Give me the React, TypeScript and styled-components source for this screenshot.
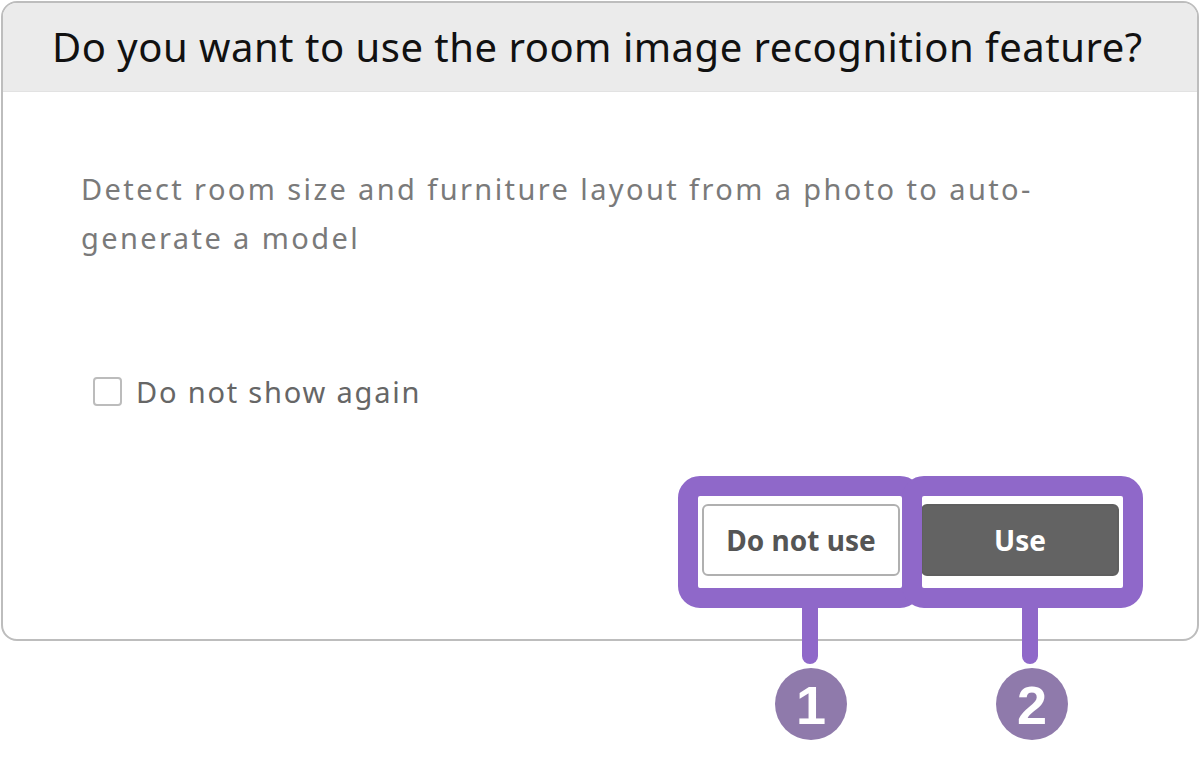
import styled, { createGlobalStyle } from 'styled-components'

const GlobalStyle = createGlobalStyle`
  html, body {
    margin: 0;
    padding: 0;
    background: #ffffff;
  }
  body {
    font-family: "Noto Sans", "Open Sans", sans-serif;
  }
`

const ui = {
  Page: styled.div`
    position: relative;
    width: 1200px;
    height: 758px;
    overflow: hidden;
  `,
  Dialog: styled.section`
    box-sizing: border-box;
    margin: 1px 0 0 1px;
    width: 1198px;
    height: 640px;
    border: 2px solid #bdbdbd;
    border-radius: 16px;
    overflow: hidden;
    display: flex;
    flex-direction: column;
    background: #ffffff;
  `,
  Header: styled.header`
    height: 89px;
    flex-shrink: 0;
    display: flex;
    align-items: center;
    padding: 0 0 2px 49px;
    box-sizing: border-box;
    background: #ebebeb;
    border-bottom: 1px solid #e2e2e2;
  `,
  Title: styled.h2`
    margin: 0;
    font-size: 40px;
    font-weight: 400;
    color: #111111;
    letter-spacing: 0.5px;
    white-space: nowrap;
  `,
  Body: styled.div`
    flex: 1;
    display: flex;
    flex-direction: column;
    padding: 72px 78px 0 78px;
  `,
  Description: styled.p`
    margin: 0;
    width: 1010px;
    font-size: 29px;
    line-height: 49px;
    letter-spacing: 2.4px;
    color: #7a7a7a;
  `,
  CheckRow: styled.label`
    margin: 110px 0 0 12px;
    display: flex;
    align-items: center;
    gap: 14px;
    font-size: 29px;
    letter-spacing: 1.8px;
    color: #666666;
  `,
  Box: styled.span`
    width: 25px;
    height: 25px;
    border: 2px solid #bcbcbc;
    border-radius: 4px;
    background: #ffffff;
  `,
  Footer: styled.div`
    margin-top: 93px;
    display: flex;
    justify-content: flex-end;
    gap: 21px;
  `,
  Button: styled.button<{ $primary?: boolean }>`
    box-sizing: border-box;
    width: 198px;
    height: 72px;
    border-radius: 6px;
    border: 2px solid ${({ $primary }) => ($primary ? '#5f5f5f' : '#b0b0b0')};
    background: ${({ $primary }) => ($primary ? '#636363' : '#ffffff')};
    color: ${({ $primary }) => ($primary ? '#ffffff' : '#555555')};
    font-family: "Noto Sans", "Open Sans", sans-serif;
    font-size: 28px;
    font-weight: 700;
    padding: 0;
  `,
  // callout frames drawn over the dialog buttons
  Frame: styled.div<{ $left: number; $width: number }>`
    position: absolute;
    top: 476px;
    left: ${({ $left }) => $left}px;
    width: ${({ $width }) => $width}px;
    height: 132px;
    box-sizing: border-box;
    border: 20px solid #8f68c9;
    border-radius: 22px;
  `,
  Stem: styled.div<{ $left: number }>`
    position: absolute;
    top: 600px;
    left: ${({ $left }) => $left}px;
    width: 16px;
    height: 64px;
    background: #8f68c9;
    border-radius: 0 0 8px 8px;
  `,
  Badge: styled.div<{ $left: number }>`
    position: absolute;
    top: 668px;
    left: ${({ $left }) => $left}px;
    width: 72px;
    height: 72px;
    border-radius: 50%;
    background: #8f7aab;
    color: #ffffff;
    display: flex;
    align-items: center;
    justify-content: center;
    font-family: "Liberation Sans", Arial, sans-serif;
    font-weight: 700;
    font-size: 54px;
    line-height: 1;
    padding-top: 2px;
    box-sizing: border-box;
  `
}

const App = () => {
  return (
    <>
      <GlobalStyle />
      <ui.Page>
        <ui.Dialog>
          <ui.Header>
            <ui.Title>Do you want to use the room image recognition feature?</ui.Title>
          </ui.Header>
          <ui.Body>
            <ui.Description>
              Detect room size and furniture layout from a photo to auto-generate a model
            </ui.Description>
            <ui.CheckRow>
              <ui.Box />
              Do not show again
            </ui.CheckRow>
            <ui.Footer>
              <ui.Button>Do not use</ui.Button>
              <ui.Button $primary>Use</ui.Button>
            </ui.Footer>
          </ui.Body>
        </ui.Dialog>

        <ui.Frame $left={678} $width={244} />
        <ui.Frame $left={902} $width={241} />
        <ui.Stem $left={802} />
        <ui.Stem $left={1022} />
        <ui.Badge $left={775}>1</ui.Badge>
        <ui.Badge $left={996}>2</ui.Badge>
      </ui.Page>
    </>
  )
}

export default App
